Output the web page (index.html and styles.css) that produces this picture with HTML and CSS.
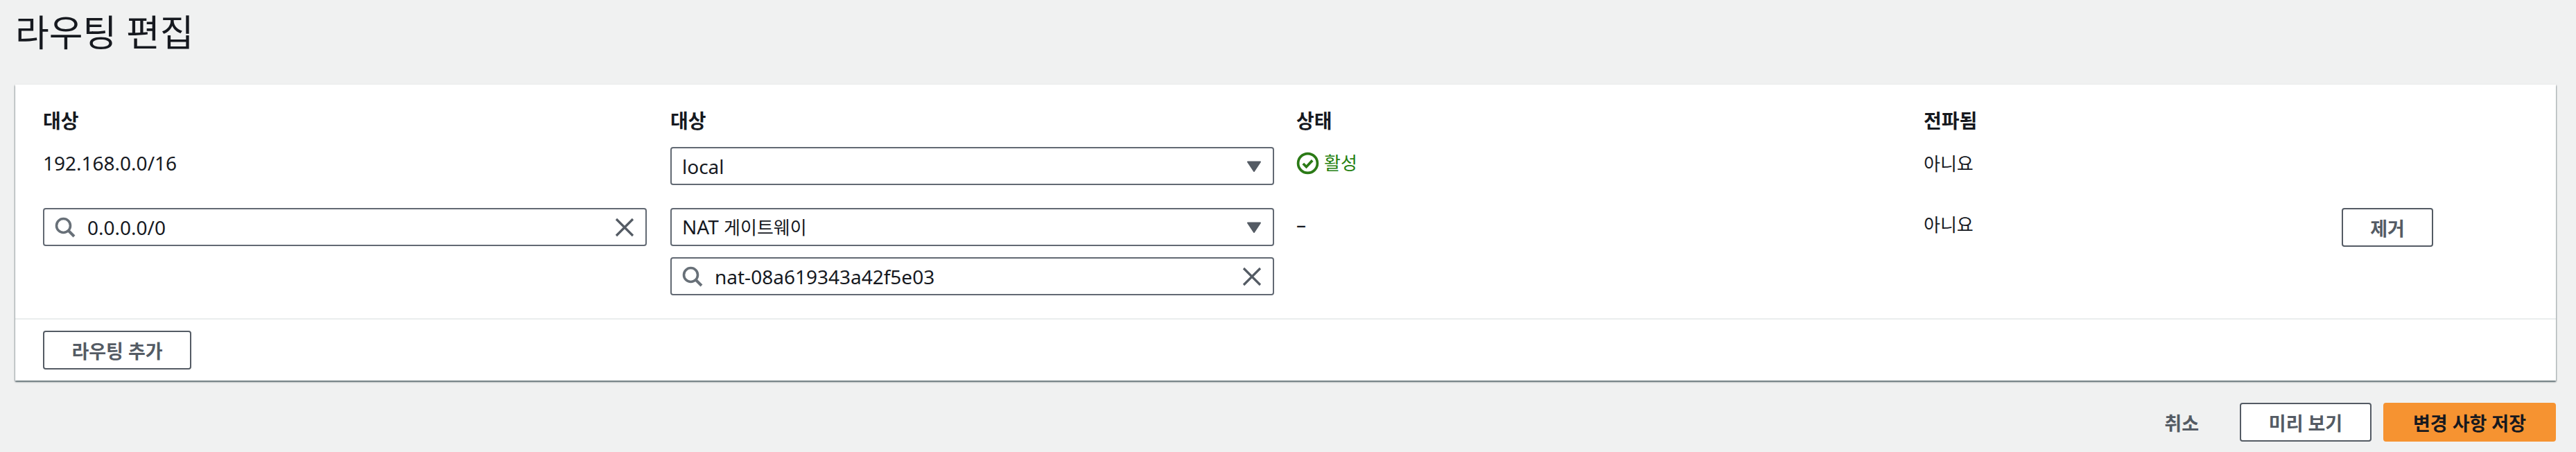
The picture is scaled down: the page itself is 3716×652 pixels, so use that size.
FILE: index.html
```html
<!DOCTYPE html>
<html lang="ko">
<head>
    <meta charset="UTF-8">
    <title>라우팅 편집</title>
    <link rel="stylesheet" href="styles.css">
</head>
<body>

    <h1 class="page-title">라우팅 편집</h1>

    <!-- Routes card -->
    <section class="card">
        <div class="card-body">
            <div class="route-grid">
                <div class="col-label">대상</div>
                <div class="col-label">대상</div>
                <div class="col-label">상태</div>
                <div class="col-label">전파됨</div>
                <div class="col-label"></div>

                <div class="cell-text">192.168.0.0/16</div>
                <div class="cell">
                    <div class="field">
                        <span class="field-text">local</span>
                        <svg class="caret" viewBox="0 0 22 16"><path d="M2 1.5h18L11 15z" fill="#545b64" stroke="#545b64" stroke-width="2" stroke-linejoin="round"/></svg>
                    </div>
                </div>
                <div class="cell-text status-active">
                    <svg class="status-icon" viewBox="0 0 32 32"><circle cx="16" cy="16" r="13.5" fill="none" stroke="#2b7a16" stroke-width="3.6"/><path d="M9.5 16.5l4.5 4.5 8.5-9" fill="none" stroke="#2b7a16" stroke-width="3.6"/></svg>
                    <span class="ko">활성</span>
                </div>
                <div class="cell-text"><span class="ko">아니요</span></div>
                <div></div>

                <div class="cell">
                    <div class="field">
                        <svg class="search-icon" viewBox="0 0 30 30"><circle cx="12.5" cy="12.5" r="10" fill="none" stroke="#687078" stroke-width="3.6"/><path d="M19.5 19.5L28 28" stroke="#687078" stroke-width="4"/></svg>
                        <span class="field-text">0.0.0.0/0</span>
                        <svg class="clear-icon" viewBox="0 0 28 28"><path d="M2 2l24 24M26 2L2 26" stroke="#545b64" stroke-width="3.2"/></svg>
                    </div>
                </div>
                <div class="cell stack">
                    <div class="field">
                        <span class="field-text">NAT <span class="ko">게이트웨이</span></span>
                        <svg class="caret" viewBox="0 0 22 16"><path d="M2 1.5h18L11 15z" fill="#545b64" stroke="#545b64" stroke-width="2" stroke-linejoin="round"/></svg>
                    </div>
                    <div class="field">
                        <svg class="search-icon" viewBox="0 0 30 30"><circle cx="12.5" cy="12.5" r="10" fill="none" stroke="#687078" stroke-width="3.6"/><path d="M19.5 19.5L28 28" stroke="#687078" stroke-width="4"/></svg>
                        <span class="field-text">nat-08a619343a42f5e03</span>
                        <svg class="clear-icon" viewBox="0 0 28 28"><path d="M2 2l24 24M26 2L2 26" stroke="#545b64" stroke-width="3.2"/></svg>
                    </div>
                </div>
                <div class="cell-text">–</div>
                <div class="cell-text"><span class="ko">아니요</span></div>
                <div><button class="btn btn-remove" type="button">제거</button></div>
            </div>
        </div>
        <div class="card-footer">
            <button class="btn btn-add" type="button">라우팅 추가</button>
        </div>
    </section>

    <!-- Page actions -->
    <div class="actions">
        <button class="btn-link" type="button">취소</button>
        <button class="btn btn-preview" type="button">미리 보기</button>
        <button class="btn btn-primary" type="button">변경 사항 저장</button>
    </div>

</body>
</html>
```

FILE: styles.css
```css
/* General page styles */
html, body {
    height: 652px;
    overflow: hidden;
}

body {
    font-family: 'Noto Sans', 'Noto Sans CJK KR', sans-serif;
    font-size: 28px;
    line-height: 36px;
    margin: 0;
    padding: 0 29px 0 22px;
    background-color: #f0f1f1;
    color: #16191f;
}

/* Korean body text runs a little smaller than the latin next to it */
.ko {
    font-size: 26px;
}

/* Header */
.page-title {
    font-size: 53px;
    font-weight: 400;
    line-height: 72px;
    margin: 11px 0 39px;
}

/* Card */
.card {
    background-color: #ffffff;
    box-shadow: 0 2px 2px rgba(0, 28, 36, 0.5), 1px 1px 2px rgba(0, 28, 36, 0.2), -1px 1px 2px rgba(0, 28, 36, 0.2);
}

.card-body {
    padding: 34px 40px 33px;
}

.card-footer {
    border-top: 2px solid #eaeded;
    padding: 16px 40px;
}

.route-grid {
    display: grid;
    grid-template-columns: 905px 903px 905px 603px 1fr;
    row-gap: 33px;
}

.col-label {
    font-weight: 700;
    height: 36px;
    margin-bottom: -13px;
}

.cell-text {
    padding-top: 5px;
}

.stack {
    display: flex;
    flex-direction: column;
    gap: 16px;
}

/* Form fields */
.field {
    display: flex;
    align-items: center;
    box-sizing: border-box;
    width: 871px;
    height: 55px;
    padding: 0 16px 0 15px;
    border: 2px solid #626973;
    border-radius: 4px;
    background-color: #ffffff;
}

.field-text {
    flex: 1;
}

.caret {
    width: 22px;
    height: 16px;
}

.search-icon {
    width: 30px;
    height: 30px;
    margin-right: 17px;
}

.clear-icon {
    width: 28px;
    height: 28px;
}

/* Status */
.status-active {
    display: flex;
    align-items: center;
    gap: 7px;
    height: 36px;
    color: #247f10;
}

.status-icon {
    width: 33px;
    height: 33px;
}

/* Buttons */
.btn {
    box-sizing: border-box;
    height: 56px;
    padding: 0;
    border: 2px solid #545b64;
    border-radius: 4px;
    background-color: #ffffff;
    color: #545b64;
    font-family: inherit;
    font-size: 27px;
    font-weight: 700;
}

.btn-remove {
    width: 132px;
}

.btn-add {
    width: 214px;
}

.btn-preview {
    width: 190px;
}

.btn-primary {
    width: 249px;
    border-color: #f69331;
    background-color: #f69331;
    color: #16191f;
}

.btn-link {
    border: none;
    background: none;
    padding: 0;
    color: #545b64;
    font-family: inherit;
    font-size: 27px;
    font-weight: 700;
}

/* Page actions */
.actions {
    display: flex;
    justify-content: flex-end;
    align-items: center;
    margin-top: 32px;
}

.actions .btn-link {
    margin-right: 59px;
}

.actions .btn-preview {
    margin-right: 17px;
}
```
